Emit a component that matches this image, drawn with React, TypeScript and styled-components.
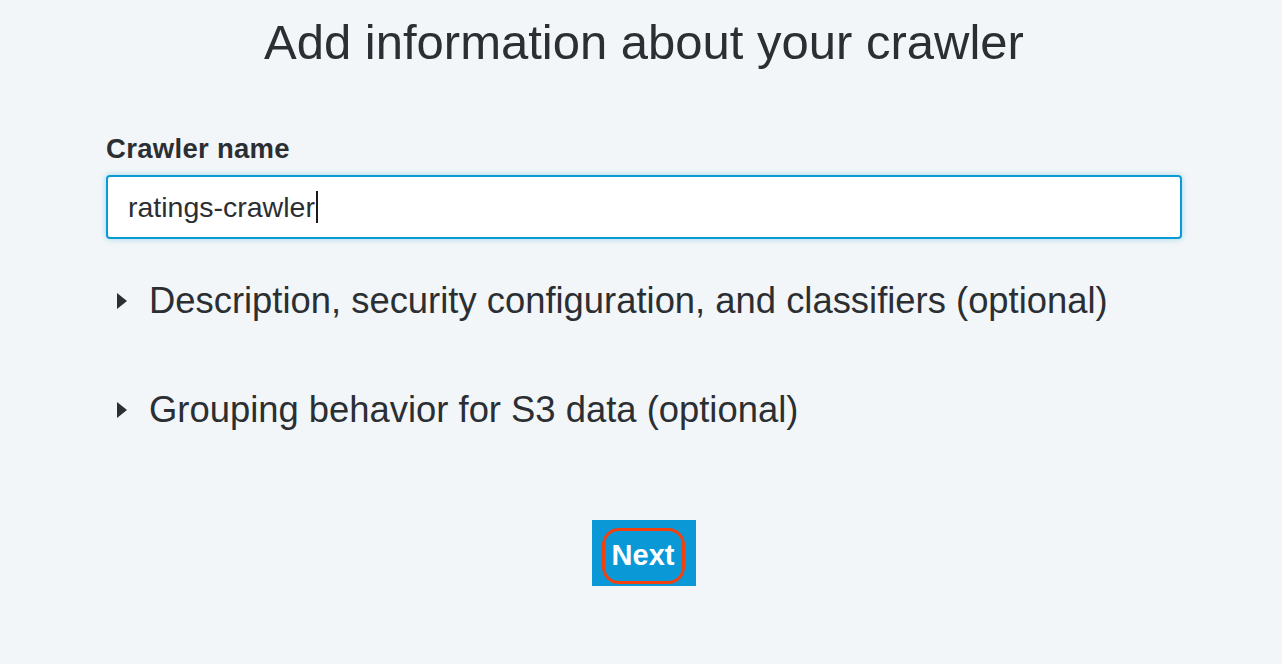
import React from "react";
import styled, { createGlobalStyle } from "styled-components";

const Global = createGlobalStyle`
  html, body { margin: 0; padding: 0; background: #f2f6f8; }
  body { font-family: "Liberation Sans", Arial, sans-serif; color: #2b2f33; }
`;

const Page = styled.div`
  width: 1282px;
  height: 664px;
  box-sizing: border-box;
  display: flex;
  flex-direction: column;
  padding: 12px 100px 0 106px;
`;

const Title = styled.h1`
  margin: 0;
  text-align: center;
  font-weight: 400;
  font-size: 49px;
  line-height: 60px;
  color: #2b2f33;
`;

const Label = styled.label`
  margin-top: 62px;
  font-weight: 700;
  font-size: 27.5px;
  letter-spacing: 0.3px;
  line-height: 30px;
  color: #2b2f33;
`;

const InputBox = styled.div`
  margin-top: 11px;
  height: 64px;
  box-sizing: border-box;
  background: #fff;
  border: 2px solid #0a9ad6;
  border-radius: 4px;
  box-shadow: 0 0 6px rgba(10, 154, 214, 0.35);
  display: flex;
  align-items: center;
  padding-left: 20px;
  font-size: 28.5px;
  color: #2b2f33;
`;

const Caret = styled.span`
  display: inline-block;
  width: 2px;
  height: 32px;
  background: #1a1a1a;
  margin-left: 1px;
`;

const Expander = styled.div<{ $top: number }>`
  margin-top: ${(p) => p.$top}px;
  display: flex;
  align-items: center;
  gap: 22px;
  padding-left: 11px;
  font-size: 36.4px;
  line-height: 44px;
  color: #2b2f33;
`;

const Arrow = styled.span`
  width: 0;
  height: 0;
  border-top: 8px solid transparent;
  border-bottom: 8px solid transparent;
  border-left: 10px solid #2b2f33;
`;

const ButtonRow = styled.div`
  margin-top: 88px;
  display: flex;
  justify-content: center;
`;

const Button = styled.button`
  width: 104px;
  height: 66px;
  border: none;
  background: #0a99d6;
  display: flex;
  align-items: center;
  justify-content: center;
  padding: 0;
  cursor: pointer;
`;

const Highlight = styled.span`
  width: 83px;
  height: 56px;
  box-sizing: border-box;
  border: 3px solid #f2410f;
  border-radius: 17px;
  display: flex;
  align-items: center;
  justify-content: center;
  color: #fff;
  font-family: "Liberation Sans", Arial, sans-serif;
  font-weight: 700;
  font-size: 29px;
  margin-top: 5px;
  margin-left: -2px;
`;

export default function App() {
  return (
    <>
      <Global />
      <Page>
        <Title>Add information about your crawler</Title>
        <Label>Crawler name</Label>
        <InputBox>
          ratings-crawler
          <Caret />
        </InputBox>
        <Expander $top={40}>
          <Arrow />
          Description, security configuration, and classifiers (optional)
        </Expander>
        <Expander $top={65}>
          <Arrow />
          Grouping behavior for S3 data (optional)
        </Expander>
        <ButtonRow>
          <Button>
            <Highlight>Next</Highlight>
          </Button>
        </ButtonRow>
      </Page>
    </>
  );
}
